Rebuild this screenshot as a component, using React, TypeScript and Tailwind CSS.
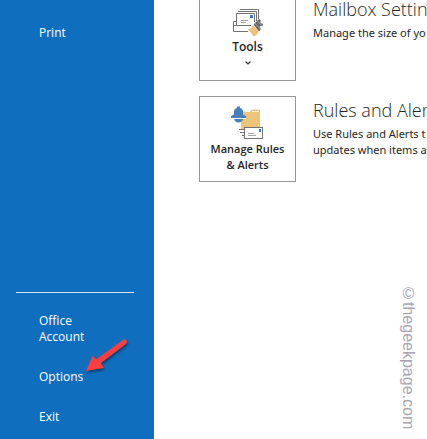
import type { ReactNode } from "react";

function ToolsIcon() {
  return (
    <svg aria-hidden width="32" height="28" viewBox="0 0 32 28" fill="none">
      {/* Stacked envelopes */}
      <g stroke="#737373">
        <path d="M8 .5H26.5V10" />
        <path d="M6 2.5H24.5V12" />
        <path d="M4.5 16V4.5H22.5V13" />
        <path d="M4 12.5H1.5V22.5H16" />
        <path d="M2 16.5H19" />
      </g>
      <path d="M9 11.5H16M9 13.5H14" stroke="#a6a6a6" />
      <rect x="18" y="6" width="3" height="3" fill="#3a78c2" />
      {/* Brush */}
      <path d="M21.5 15.5L27 10L28.5 11V14L31 15L30.5 17L27.5 17.5L29 20L27 22.5Z" fill="#666" />
      <path d="M22.5 14L29 20.5M26 12.5L29.5 16.5" stroke="#c9c9c9" strokeWidth=".8" />
      <path d="M15.5 20.5Q19.5 20 21 16L26.5 22Q26 26 21.5 27.5Q20 24 15.5 20.5Z" fill="#efc27c" />
    </svg>
  );
}

function RulesIcon() {
  return (
    <svg aria-hidden width="33" height="33" viewBox="0 0 33 33" fill="none">
      {/* Folder */}
      <path d="M10 6H18.5L21 3.5H29V24H10Z" fill="#ecc57a" />
      <path d="M21 5.5H28" stroke="#fff3dc" />
      {/* Bell */}
      <path d="M0 12.5V10L3 8.5V6Q3 2.5 6 2V.5H9V2Q12 2.5 12 6V8.5L15 10V12.5Z" fill="#4680bd" />
      <path d="M0 12.5H15" stroke="#fff" />
      <path d="M3 13H12Q11 16.5 7.5 16.5T3 13Z" fill="#4680bd" />
      {/* Envelope */}
      <path d="M8 23.5H13M9 26.5H13M11 29.5H13" stroke="#737373" />
      <rect x="13.5" y="21.5" width="18" height="11" fill="#fff" stroke="#737373" />
      <path d="M17 27.5H23M17 29.5H25" stroke="#a6a6a6" />
      <rect x="28" y="23" width="2" height="3" fill="#3a78c2" />
    </svg>
  );
}

function MenuItem({ children }: { children: ReactNode }) {
  return (
    <button type="button" className="block w-full py-3 pr-10 pl-[39px] text-left">
      {children}
    </button>
  );
}

function Arrow() {
  return (
    <svg
      aria-hidden
      className="pointer-events-none absolute -top-5 left-[84px] drop-shadow-[1px_2px_1px_rgba(0,0,0,0.4)]"
      width="46"
      height="38"
      viewBox="0 0 46 38"
    >
      <path d="M39 3Q41.500 1.500 42.500 3.500T42 7L17 26L20 31L2 34L8.500 19L12.500 22Z" fill="#fb3e3f" />
    </svg>
  );
}

const cardClass =
  "flex w-[97px] shrink-0 flex-col items-center border border-[#979797] bg-white pt-[9px] text-center text-[11px] leading-4 font-semibold";

const titleClass = "font-['Open_Sans',sans-serif] text-[18px] leading-[18px] font-light";

export default function App() {
  return (
    <div className="flex min-h-screen overflow-hidden bg-white font-['Open_Sans','Noto_Sans',sans-serif] text-[12px] leading-4 text-[#262626]">
      <nav className="flex w-[154px] shrink-0 flex-col justify-between bg-[#106ebe] pt-[13px] pb-0.5 text-white">
        <MenuItem>Print</MenuItem>
        <div>
          <hr className="mr-5 mb-2 ml-4 border-[#d5e5f4]" />
          <MenuItem>Office Account</MenuItem>
          <div className="relative">
            <MenuItem>Options</MenuItem>
            <Arrow />
          </div>
          <MenuItem>Exit</MenuItem>
        </div>
      </nav>

      <main className="relative min-w-0 flex-1 overflow-hidden pl-[45px]">
        <section className="flex gap-[17px]">
          <button type="button" className={`${cardClass} h-[81px] border-t-0`}>
            <ToolsIcon />
            <span className="mt-0.5 text-[12px]">Tools</span>
            <svg aria-hidden className="mt-1" width="8" height="8" viewBox="0 0 8 8" fill="none">
              <path d="M1.5 2.5L4 5L6.5 2.5" stroke="#333" strokeWidth="1.2" />
            </svg>
          </button>
          <div className="font-['Noto_Sans',sans-serif] text-[11px] leading-4 whitespace-nowrap">
            <h2 className={titleClass}>Mailbox Settin</h2>
            <p className="mt-[7px]">Manage the size of yo</p>
          </div>
        </section>

        <section className="mt-[15px] flex gap-[17px]">
          <button type="button" className={`${cardClass} h-[86px]`}>
            <RulesIcon />
            <span className="mt-0.5 whitespace-nowrap">
              Manage Rules
              <br />
              &amp; Alerts
            </span>
          </button>
          <div className="pt-[5px] font-['Noto_Sans',sans-serif] text-[11px] leading-4 whitespace-nowrap">
            <h2 className={titleClass}>Rules and Aler</h2>
            <p className="mt-[7px]">
              Use Rules and Alerts t
              <br />
              updates when items a
            </p>
          </div>
        </section>

        <p className="absolute right-[9px] bottom-2.5 font-['Liberation_Sans',Arial,sans-serif] text-[16px] leading-5 text-[#aaa6b0] [writing-mode:vertical-rl]">
          ©thegeekpage.com
        </p>
      </main>
    </div>
  );
}
